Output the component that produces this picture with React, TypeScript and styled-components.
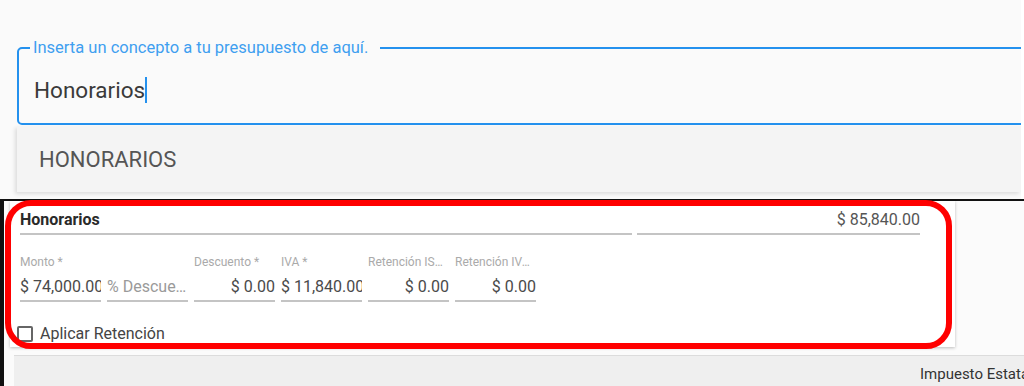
import React from 'react';
import styled, { createGlobalStyle } from 'styled-components';

const GlobalStyle = createGlobalStyle`
  html, body {
    margin: 0;
    padding: 0;
    background: #ffffff;
    font-family: Roboto, "Liberation Sans", Arial, sans-serif;
    overflow: hidden;
  }
`;

const Page = styled.div`
  width: 1024px;
  height: 386px;
  overflow: hidden;
  display: flex;
  flex-direction: column;
`;

/* ---------- top: autocomplete ---------- */

const SearchArea = styled.div`
  width: 1021px;
  height: 199px;
  background: #fafafa;
  padding: 39px 0 0 17px;
  box-sizing: border-box;
  display: flex;
  flex-direction: column;
  overflow: hidden;
`;

const Outlined = styled.fieldset`
  margin: 0;
  width: 1020px;
  height: 86px;
  box-sizing: border-box;
  border: 2px solid #2491ee;
  border-radius: 5px;
  padding: 20px 0 0 15px;
  display: block;
`;

const Legend = styled.legend`
  margin-left: -4px;
  padding: 0 12px 0 3px;
  font-size: 16.5px;
  line-height: 18px;
  color: #3f9ff0;
`;

const InputText = styled.div`
  display: flex;
  align-items: center;
  font-size: 22.5px;
  line-height: 26px;
  color: #3a3a3a;
`;

const Caret = styled.span`
  display: inline-block;
  width: 2px;
  height: 26px;
  background: #2491ee;
`;

const Suggestion = styled.div`
  width: 1004px;
  height: 66px;
  margin-top: 1px;
  background: #f4f4f4;
  box-shadow: -2px 2px 4px rgba(0, 0, 0, 0.12);
  display: flex;
  align-items: center;
  padding-left: 22px;
  box-sizing: border-box;
  font-size: 22px;
  color: #555;
`;

/* ---------- bottom: concept card ---------- */

const Frame = styled.div`
  position: relative;
  flex: 1;
  border-top: 2px solid #111;
  border-left: 4px solid #111;
  background: #fbfbfb;
  display: flex;
  flex-direction: column;
  padding-left: 6px;
`;

const Card = styled.div`
  width: 945px;
  height: 146px;
  box-sizing: border-box;
  background: #fff;
  box-shadow: 0 1px 3px rgba(0, 0, 0, 0.25);
  padding: 4px 0 0 10px;
  overflow: hidden;
  display: flex;
  flex-direction: column;
`;

const TitleRow = styled.div`
  display: flex;
  gap: 5px;
`;

const LineField = styled.div<{ $w: number; $align?: string; $bold?: boolean }>`
  width: ${(p) => p.$w}px;
  height: 28px;
  border-bottom: 2px solid #c4c4c4;
  display: flex;
  align-items: center;
  justify-content: ${(p) => p.$align || 'flex-start'};
  font-size: 16px;
  font-weight: ${(p) => (p.$bold ? 700 : 400)};
  color: ${(p) => (p.$bold ? '#2a2a2a' : '#555')};
`;

const FieldsRow = styled.div`
  display: flex;
  gap: 6px;
  margin-top: 20px;
`;

const Field = styled.div`
  width: 81px;
  display: flex;
  flex-direction: column;
`;

const Label = styled.div`
  max-width: 77px;
  font-size: 12px;
  line-height: 14px;
  height: 14px;
  color: #aaa;
  white-space: nowrap;
  overflow: hidden;
  text-overflow: ellipsis;
`;

const Value = styled.div<{ $right?: boolean; $placeholder?: boolean }>`
  height: 27px;
  margin-top: 4px;
  border-bottom: 2px solid #c4c4c4;
  font-size: 16px;
  line-height: 27px;
  color: ${(p) => (p.$placeholder ? '#9a9a9a' : '#4a4a4a')};
  text-align: ${(p) => (p.$right ? 'right' : 'left')};
  white-space: nowrap;
  overflow: hidden;
  text-overflow: ${(p) => (p.$placeholder ? 'ellipsis' : 'clip')};
`;

const CheckRow = styled.div`
  display: flex;
  align-items: center;
  gap: 7px;
  margin-top: 22px;
  margin-left: -3px;
  font-size: 16px;
  color: #444;
`;

const Box = styled.span`
  width: 12px;
  height: 12px;
  border: 2px solid #666;
  border-radius: 2px;
`;

const TaxBand = styled.div`
  margin-top: 8px;
  margin-left: 4px;
  flex: 1;
  background: #efefef;
  border-top: 1px solid #dcdcdc;
  display: flex;
  align-items: flex-end;
  padding: 0 0 3px 906px;
  font-size: 15px;
  color: #333;
  overflow: hidden;
  white-space: nowrap;
`;

const Highlight = styled.div`
  position: absolute;
  left: 1px;
  top: -1px;
  width: 947px;
  height: 149px;
  box-sizing: border-box;
  border: 6px solid #ff0000;
  border-radius: 26px;
  pointer-events: none;
`;

const fields = [
  { label: 'Monto *', value: '$ 74,000.00' },
  { label: '', value: '% Descuento', placeholder: true },
  { label: 'Descuento *', value: '$ 0.00', right: true },
  { label: 'IVA *', value: '$ 11,840.00' },
  { label: 'Retención ISR *', value: '$ 0.00', right: true },
  { label: 'Retención IVA *', value: '$ 0.00', right: true },
];

export default function App() {
  return (
    <Page>
      <GlobalStyle />
      <SearchArea>
        <Outlined>
          <Legend>Inserta un concepto a tu presupuesto de aquí.</Legend>
          <InputText>
            Honorarios
            <Caret />
          </InputText>
        </Outlined>
        <Suggestion>HONORARIOS</Suggestion>
      </SearchArea>
      <Frame>
        <Card>
          <TitleRow>
            <LineField $w={612} $bold>Honorarios</LineField>
            <LineField $w={283} $align="flex-end">$ 85,840.00</LineField>
          </TitleRow>
          <FieldsRow>
            {fields.map((f, i) => (
              <Field key={i}>
                <Label>{f.label}</Label>
                <Value $right={f.right} $placeholder={f.placeholder}>
                  {f.value}
                </Value>
              </Field>
            ))}
          </FieldsRow>
          <CheckRow>
            <Box />
            Aplicar Retención
          </CheckRow>
        </Card>
        <TaxBand>Impuesto Estatal</TaxBand>
        <Highlight />
      </Frame>
    </Page>
  );
}
